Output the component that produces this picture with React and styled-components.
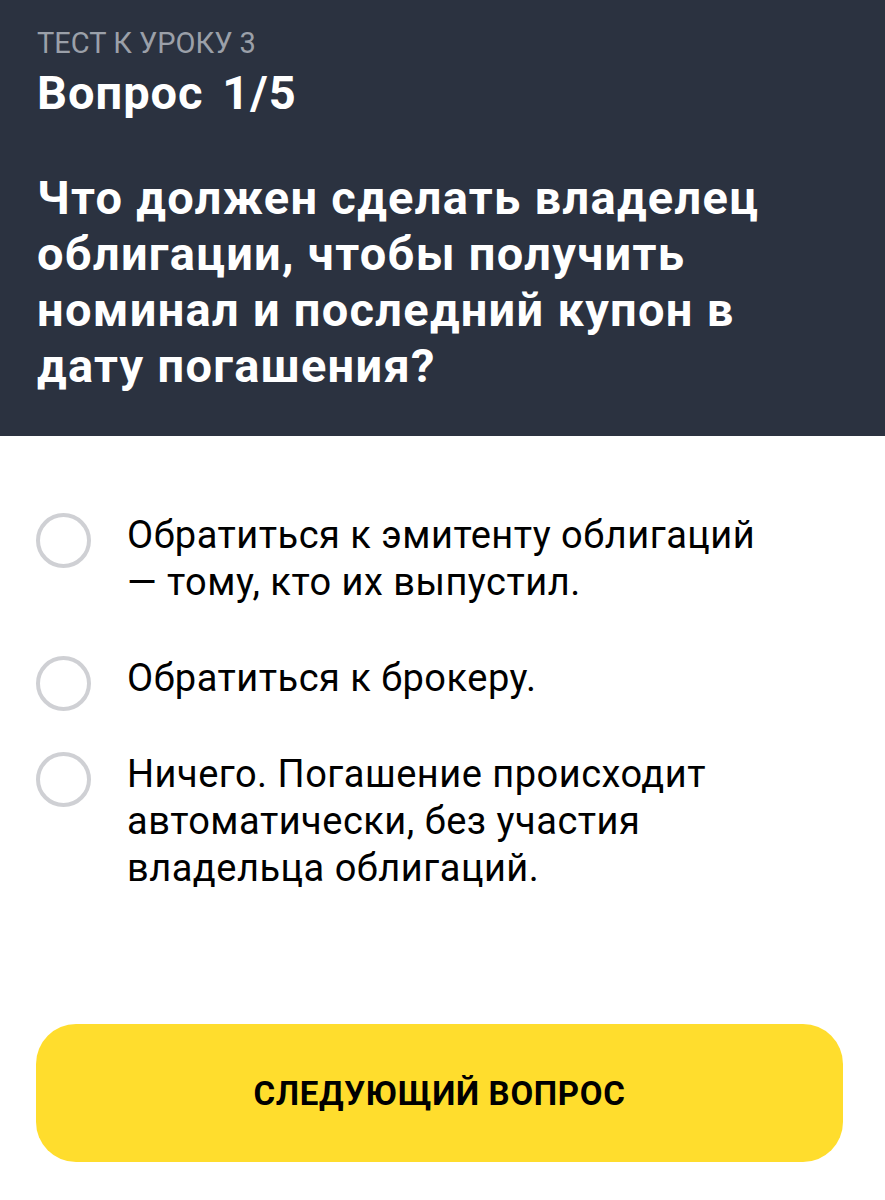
import styled, { createGlobalStyle } from "styled-components";

const GlobalStyle = createGlobalStyle`
  html, body {
    margin: 0;
    padding: 0;
    background: #fff;
  }
  body {
    font-family: Roboto, "Noto Sans", Arial, sans-serif;
  }
`;

const answers = [
  "Обратиться к эмитенту облигаций — тому, кто их выпустил.",
  "Обратиться к брокеру.",
  "Ничего. Погашение происходит автоматически, без участия владельца облигаций.",
];

export default function App() {
  return (
    <>
      <GlobalStyle />
      <Page>
        <Header>
          <Label>ТЕСТ К УРОКУ 3</Label>
          <Title>Вопрос 1/5</Title>
          <Question>
            Что должен сделать владелец облигации, чтобы получить номинал и
            последний купон в дату погашения?
          </Question>
        </Header>

        {/* list of answers */}
        <Answers>
          {answers.map((text, i) => (
            <Answer key={`answer${i}`}>
              <Radio />
              <AnswerText>{text}</AnswerText>
            </Answer>
          ))}
        </Answers>

        <Footer>
          <Button type="button">Следующий вопрос</Button>
        </Footer>
      </Page>
    </>
  );
}

const Page = styled.div`
  min-height: 100vh;
  display: flex;
  flex-direction: column;
`;

const Header = styled.header`
  background-color: #2b3240;
  padding: 26px 37px 42px;
  display: flex;
  flex-direction: column;
`;

const Label = styled.div`
  color: #9ba0a9;
  font-size: 29px;
  line-height: 1.2;
  font-weight: 400;
`;

const Title = styled.h1`
  margin: 4px 0 0;
  color: #fff;
  font-size: 47px;
  line-height: 56px;
  font-weight: 700;
  letter-spacing: 1px;
  word-spacing: 6px;
`;

const Question = styled.h2`
  margin: 49px 0 0;
  color: #fff;
  font-size: 47px;
  line-height: 56px;
  font-weight: 700;
  letter-spacing: 1.3px;
  max-width: 800px;
`;

const Answers = styled.div`
  display: flex;
  flex-direction: column;
  gap: 49px;
  padding: 76px 36px 0;
`;

const Answer = styled.label`
  display: flex;
  align-items: flex-start;
  gap: 36px;
  cursor: pointer;
`;

// the circle is taller than one text line, so it hangs below the row
const Radio = styled.span`
  flex: none;
  width: 55px;
  height: 55px;
  margin: 1px 0 -9px;
  box-sizing: border-box;
  border: 4px solid #cfd0d4;
  border-radius: 50%;
`;

const AnswerText = styled.span`
  color: #000;
  font-size: 38px;
  line-height: 47px;
  letter-spacing: 0.5px;
  max-width: 660px;
`;

const Footer = styled.div`
  margin-top: auto;
  padding: 0 42px 38px 36px;
`;

const Button = styled.button`
  width: 100%;
  height: 138px;
  border: none;
  border-radius: 40px;
  background-color: #ffdd2d;
  color: #000;
  font-family: Roboto, Arial, sans-serif;
  font-size: 33px;
  font-weight: 700;
  letter-spacing: 0.7px;
  text-transform: uppercase;
  cursor: pointer;
`;
